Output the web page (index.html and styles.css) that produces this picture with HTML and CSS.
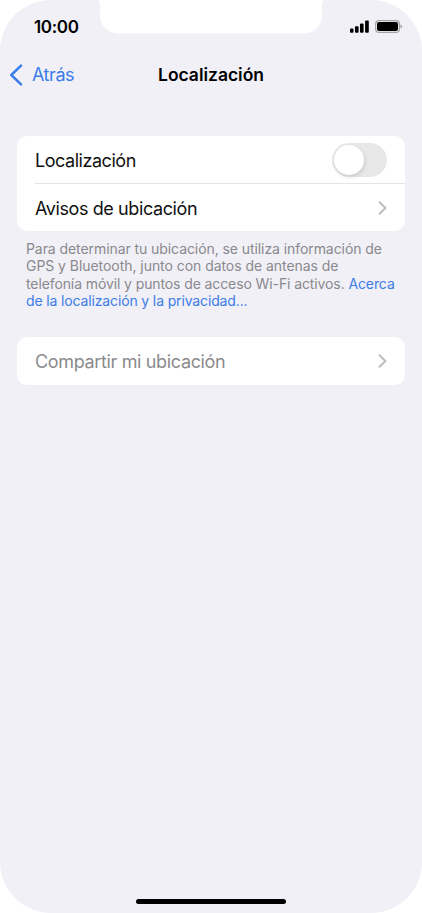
FILE: index.html
```html
<!DOCTYPE html>
<html lang="es">
<head>
<meta charset="utf-8">
<title>Localización</title>
<link rel="stylesheet" href="styles.css">
</head>
<body>
<div class="phone">
  <svg class="notch" width="230" height="34" viewBox="0 0 230 34"><path d="M0 0C3 0 4 2 4 5V14C4 26 11 33.500 24 33.500H206C219 33.500 226 26 226 14V5C226 2 227 0 230 0Z" fill="#fff"/></svg>
  <header class="status">
    <span class="time">10:00</span>
    <span class="indicators">
      <svg width="19" height="13" viewBox="0 0 19 13"><rect x="0" y="8.500" width="3.500" height="4.300" rx="1"/><rect x="5" y="6.200" width="3.600" height="6.600" rx="1"/><rect x="10" y="3.500" width="3.600" height="9.300" rx="1"/><rect x="15.100" y="0.500" width="3.700" height="12.300" rx="1"/></svg>
      <svg width="27" height="13" viewBox="0 0 27 13"><rect x=".6" y=".6" width="23.800" height="11.800" rx="3.500" fill="none" stroke="#a4a4a8" stroke-width="1.200"/><rect x="2" y="2" width="21" height="9" rx="2"/><path d="M25.500 4.500Q27 5 27 6.500T25.500 8.500Z" fill="#98989b"/></svg>
    </span>
  </header>
  <nav class="nav">
    <a class="back"><svg width="13" height="22" viewBox="0 0 13 22"><path d="M11 1.700L1.300 11L11 20.300" fill="none" stroke="#3b7de8" stroke-width="2.500" stroke-linecap="round" stroke-linejoin="round"/></svg><span>Atrás</span></a>
    <h1>Localización</h1>
  </nav>
  <main>
    <section class="card">
      <div class="row"><span class="label loc">Localización</span><span class="toggle"><span class="knob"></span></span></div>
      <div class="row divided"><span class="label avisos">Avisos de ubicación</span><svg class="chevron" width="9" height="14" viewBox="0 0 9 14"><path d="M1.500 1.200L7.400 7L1.500 12.800"/></svg></div>
    </section>
    <p class="note"><span class="l1">Para determinar tu ubicación, se utiliza información de</span><br><span class="l2">GPS y Bluetooth, junto con datos de antenas de</span><br><span class="l3">telefonía móvil y puntos de acceso Wi-Fi activos. <a>Acerca</a></span><br><a class="l4">de la localización y la privacidad...</a></p>
    <section class="card">
      <div class="row last"><span class="label share">Compartir mi ubicación</span><svg class="chevron" width="9" height="14" viewBox="0 0 9 14"><path d="M1.500 1.200L7.400 7L1.500 12.800"/></svg></div>
    </section>
  </main>
  <div class="home"></div>
</div>
</body>
</html>
```
FILE: styles.css
```css
* { box-sizing: border-box; }
body { margin: 0; background: #fff; font-family: Inter, "Liberation Sans", sans-serif; color: #000; }
.phone { position: relative; display: flex; flex-direction: column; width: 422px; height: 913px; overflow: hidden; border-radius: 51px; background: #f1f0f6; }
.notch { position: absolute; top: 0; left: 96px; }
.status { display: flex; justify-content: space-between; align-items: center; height: 54px; padding: 0 20px 0 34px; }
.time { font-size: 17px; font-weight: 600; letter-spacing: -.35px; }
.indicators { display: flex; align-items: center; gap: 6px; padding-bottom: 1px; }
.indicators svg { display: block; }
.nav { display: grid; grid-template-columns: 1fr auto 1fr; align-items: center; height: 42px; padding: 0 10px; }
.back { display: flex; align-items: center; gap: 9px; color: #3b7de8; font-size: 18px; letter-spacing: -.45px; }
.back span, h1 { padding-bottom: 2px; }
h1 { margin: 0; font-size: 17.500px; font-weight: 600; letter-spacing: -.02px; }
main { padding: 40px 17px 0; }
.card { padding-left: 18px; border-radius: 10px; background: #fff; }
.row { display: flex; align-items: center; justify-content: space-between; height: 47px; padding-right: 18px; }
.divided { height: 48px; border-top: 1px solid #e4e4e7; }
.last { height: 48px; }
.label { padding-top: 2px; font-size: 18px; color: #111; }
.loc { letter-spacing: -.46px; }
.avisos { letter-spacing: -.4px; }
.share { padding-top: 1.500px; letter-spacing: -.35px; color: #8b8b8d; }
.toggle { width: 55px; height: 34px; padding: 2px; border-radius: 17px; background: #e8e8e9; }
.knob { display: block; width: 30px; height: 30px; border-radius: 50%; background: #fff; box-shadow: 1px 2px 4px #00000020; }
.chevron { fill: none; stroke: #bdbdbf; stroke-width: 2; stroke-linecap: round; stroke-linejoin: round; }
.note { margin: 9px 9px 27.800px; font-size: 14px; line-height: 17.300px; color: #89898e; white-space: nowrap; }
.note a { color: #3b7de8; }
.l1 { letter-spacing: -.075px; }
.l2 { letter-spacing: -.05px; }
.l3 { letter-spacing: -.105px; }
.l4 { letter-spacing: -.14px; }
.home { width: 150px; height: 5px; margin: auto auto 9px; border-radius: 3px; background: #000; }
```
